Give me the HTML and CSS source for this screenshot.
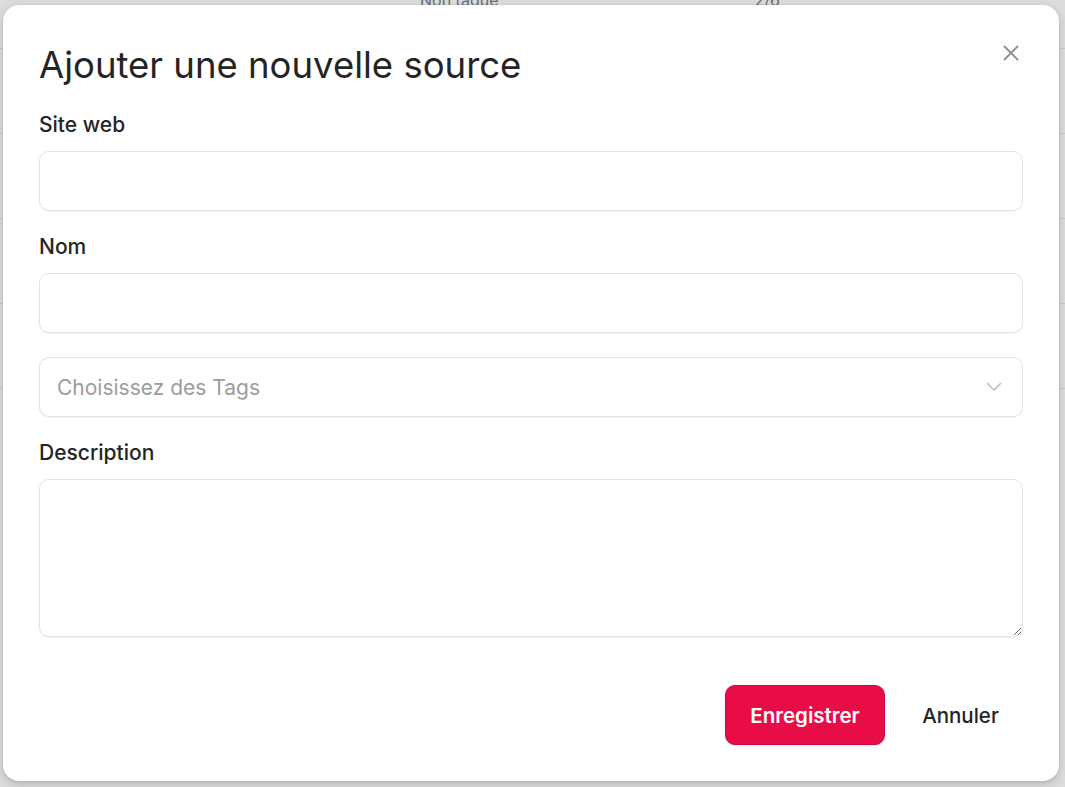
FILE: index.html
```html
<!DOCTYPE html>
<html lang="fr">
<head>
<meta charset="utf-8">
<title>Ajouter une nouvelle source</title>
<link rel="stylesheet" href="styles.css">
</head>
<body>
<div class="backdrop">
  <div class="bg-row bg-row-first">
    <span class="bg-cell bg-tag">Non tagué</span>
    <span class="bg-cell bg-count">2/6</span>
  </div>
  <div class="bg-row"></div>
  <div class="bg-row"></div>
  <div class="bg-row"></div>
  <div class="bg-row"></div>
</div>

<div class="modal" role="dialog" aria-labelledby="modal-title">
  <button class="close" type="button" aria-label="Fermer">
    <svg width="16" height="16" viewBox="0 0 16 16" fill="none" stroke="currentColor" stroke-width="1.8" stroke-linecap="round">
      <path d="M1.5 1.5 L14.5 14.5 M14.5 1.5 L1.5 14.5"/>
    </svg>
  </button>
  <h1 class="title" id="modal-title">Ajouter une nouvelle source</h1>
  <form class="form">
    <div class="field">
      <label class="label" for="site">Site web</label>
      <input class="input" id="site" type="text">
    </div>
    <div class="field">
      <label class="label" for="nom">Nom</label>
      <input class="input" id="nom" type="text">
    </div>
    <div class="field">
      <div class="select">
        <span class="placeholder">Choisissez des Tags</span>
        <svg class="chevron" width="16" height="10" viewBox="0 0 16 10" fill="none" stroke="currentColor" stroke-width="1.6" stroke-linecap="round" stroke-linejoin="round">
          <path d="M1.5 1.5 L8 8 L14.5 1.5"/>
        </svg>
      </div>
    </div>
    <div class="field">
      <label class="label" for="desc">Description</label>
      <textarea class="textarea" id="desc"></textarea>
    </div>
    <div class="actions">
      <button class="btn btn-primary" type="button">Enregistrer</button>
      <button class="btn btn-ghost" type="button">Annuler</button>
    </div>
  </form>
</div>
</body>
</html>
```
FILE: styles.css
```css
* { box-sizing: border-box; }

html, body {
  margin: 0;
  height: 100%;
}

body {
  background: #dcdcdc;
  font-family: Inter, "Noto Sans", "Liberation Sans", sans-serif;
  color: #222;
  overflow: hidden;
  position: relative;
}

.backdrop {
  display: flex;
  flex-direction: column;
}

.bg-row {
  height: 85px;
  border-bottom: 1px solid #cacaca;
}

.bg-row-first {
  height: 49px;
  display: flex;
}

.bg-cell {
  font-size: 16px;
  color: #6c6c6c;
  line-height: 16px;
  margin-top: -8px;
}

.bg-tag { margin-left: 420px; }
.bg-count { margin-left: 256px; }

.modal {
  position: absolute;
  left: 3px;
  top: 5px;
  width: 1056px;
  height: 776px;
  background: #fff;
  border-radius: 16px;
  box-shadow: 0 3px 10px rgba(0, 0, 0, 0.16), 0 1px 3px rgba(0, 0, 0, 0.08);
  padding: 36px;
}

.close {
  position: absolute;
  top: 40px;
  right: 40px;
  width: 16px;
  height: 16px;
  padding: 0;
  border: 0;
  background: transparent;
  color: #8c8c8c;
  display: flex;
  align-items: center;
  justify-content: center;
  cursor: pointer;
}

.title {
  margin: 0 0 24px;
  font-size: 36.5px;
  line-height: 48px;
  font-weight: 400;
  color: #242424;
}

.form {
  display: flex;
  flex-direction: column;
  gap: 24px;
}

.field {
  display: flex;
  flex-direction: column;
  gap: 14px;
}

.label {
  font-size: 21px;
  line-height: 24px;
  font-weight: 500;
  color: #242424;
}

.input,
.select,
.textarea {
  width: 100%;
  border: 1px solid #e2e2e2;
  border-radius: 10px;
  background: #fff;
  box-shadow: 0 1px 1px rgba(0, 0, 0, 0.04);
  font: inherit;
  font-size: 21px;
  outline: none;
}

.input {
  height: 60px;
  padding: 0 17px;
}

.select {
  height: 60px;
  padding: 0 20px 0 17px;
  display: flex;
  align-items: center;
  justify-content: space-between;
}

.placeholder {
  color: #9c9c9c;
  font-size: 21px;
}

.chevron {
  color: #bdbdbd;
}

.textarea {
  height: 158px;
  padding: 14px 17px;
  resize: vertical;
  display: block;
}

.actions {
  display: flex;
  justify-content: flex-end;
  gap: 13px;
  margin-top: 24px;
}

.btn {
  height: 60px;
  border-radius: 10px;
  font: inherit;
  font-size: 20.5px;
  cursor: pointer;
}

.btn-primary {
  width: 160px;
  background: #e80c47;
  border: 1px solid #c90d40;
  color: #fff;
  font-weight: 600;
  box-shadow: 0 1px 2px rgba(0, 0, 0, 0.12);
}

.btn-ghost {
  width: 125px;
  background: transparent;
  border: 0;
  color: #242424;
  font-weight: 500;
}
```
